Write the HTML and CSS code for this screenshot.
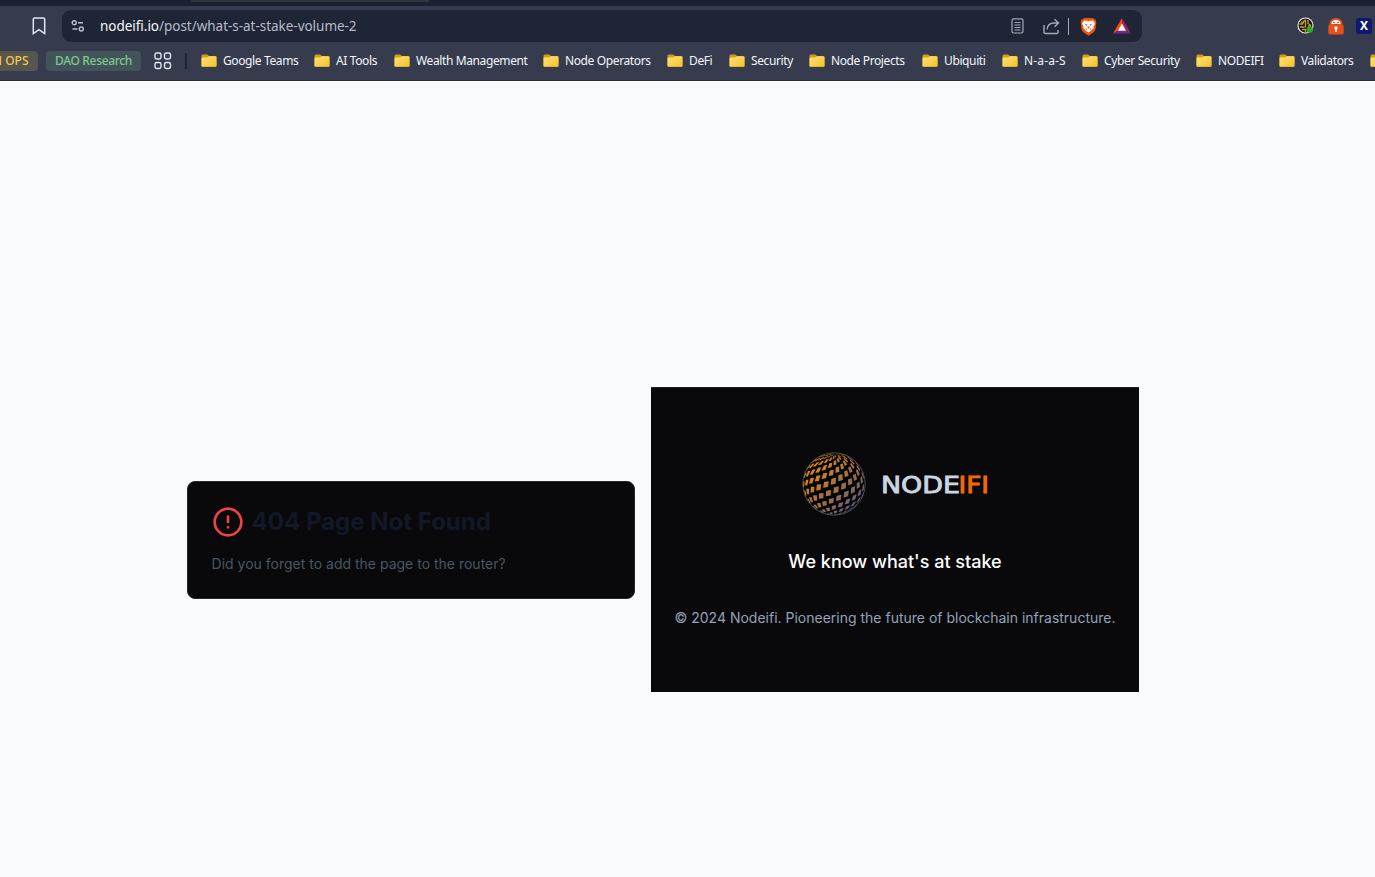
FILE: index.html
```html
<!DOCTYPE html>
<html lang="en">
<head>
<meta charset="utf-8">
<title>404 Page Not Found</title>
<link rel="stylesheet" href="styles.css">
</head>
<body>
<svg class="defs" width="0" height="0">
  <defs>
    <linearGradient id="gold" x1="0" y1="0" x2="1" y2="1"><stop offset="0" stop-color="#ffe47c"/><stop offset="1" stop-color="#f5c22c"/></linearGradient>
    <symbol id="folder" viewBox="0 0 16 14"><path d="M.5 2Q.5.5 2 .5h4L8 2h6q1.500 0 1.500 1.500V12q0 1-1 1h-13q-1 0-1-1z" fill="#d99b13"/><path d="M.5 4.500Q.5 3.500 1.500 3.500H6L8 2.300h6.500q1 0 1 1V11.500q0 1-1 1h-13q-1 0-1-1z" fill="url(#gold)"/></symbol>
  </defs>
</svg>
<div class="tabstrip"><div class="tab"></div></div>
<header class="chrome">
  <div class="toolbar">
    <svg class="bookmark" width="14" height="18" viewBox="0 0 14 18"><path d="M1.300 2.200Q1.300 1 2.500 1h9q1.200 0 1.200 1.200v14.300L7 12.700 1.300 16.500z"/></svg>
    <div class="address">
      <svg class="tune" width="14" height="14" viewBox="0 0 14 14"><circle cx="3.200" cy="3.700" r="2"/><path d="M7 3.700h5M1.500 10h5"/><circle cx="10.300" cy="10" r="2"/></svg>
      <div class="url"><b>nodeifi.io</b>/post/what-s-at-stake-volume-2</div>
      <div class="actions">
        <svg width="14" height="16" viewBox="0 0 14 16"><rect x="1" y=".8" width="11" height="14.200" rx="1.700"/><path d="M3.500 4.500h6M3.500 7h6M3.500 9.500h6M3.500 12h6"/></svg>
        <svg class="share" width="17" height="17" viewBox="0 0 17 17"><path d="M1 7v7.200q0 1.300 1.300 1.300h11.400q1.300 0 1.300-1.300V12M4 11.500C4.500 7.500 7 5 11 5h4.500M11.500 1.300 15.500 5l-4 3.800"/></svg>
        <i class="bar"></i>
        <svg class="lion" width="17" height="19" viewBox="0 0 17 19"><path d="M4 1h9l1.500 1.500h1.200l.6 3-.8 6.500q-.5 2.200-2.500 3.700L8.500 18.700 4 15.700Q2 14.200 1.500 12L.7 5.500l.6-3h1.200z" fill="#f4500b"/><path d="M4 3.500l4.500.6 4.500-.6 2 3-1.500 3 .3 1.500-2.800 2.700-2.500 1.800L6 13.700 3.200 11l.3-1.500L2 6.500z" fill="#fff"/><path d="M4.500 6.500l2.800 1-.5 1.500zM12.500 6.500l-2.800 1 .5 1.500zM7.300 9.500h2.400l-.5 2H7.800zM5.500 11.300l2 1-1.200.7zM11.500 11.300l-2 1 1.200.7z" fill="#f4500b"/></svg>
        <svg class="bat" width="18" height="16" viewBox="0 0 18 16"><path d="M9 0 0 15.500l5.800-3.300L9 6.500z" fill="#ff4713"/><path d="M9 0v6.500l3.200 5.700 5.800 3.300z" fill="#9e1f63"/><path d="M0 15.500h18l-5.800-3.300H5.800z" fill="#662d91"/><path d="m9 5.500 4 7.200H5z" fill="#fff"/></svg>
      </div>
    </div>
    <div class="extensions">
      <svg width="18" height="18" viewBox="0 0 18 18"><circle cx="8.500" cy="8.500" r="7.500" fill="#15130d" stroke="#ece9dd" stroke-width="1.200"/><path d="M2.500 7h3l2-4M3 10h4.500M5 12.500h3.500v3M8.500 2.500v8M11 3v3.500l3 2M11 9h3M4.500 4.500l1.500 2" stroke="#c9a223" stroke-width="1.300" fill="none"/><circle cx="12.700" cy="12.600" r="3.300" fill="#35a52b"/></svg>
      <svg width="16" height="17" viewBox="0 0 16 17"><path d="M2.500 7V5.500a5.500 4.500 0 0 1 11 0V7z" fill="#fff" stroke="#e84e1b" stroke-width="2"/><path d="M5 4.300h1.800M9.200 4.300H11M6 6q2 1 4 0" stroke="#c23a10" stroke-width="1" fill="none"/><rect x=".3" y="6.800" width="15.400" height="9.700" rx="1.500" fill="#e84e1b"/><circle cx="8" cy="10" r="1.700" fill="#fff"/><path d="M7.300 10h1.400v4H7.300z" fill="#fff"/></svg>
      <div class="xbadge">X</div>
    </div>
  </div>
  <nav class="bookmarks">
    <span class="chip amber">N OPS</span>
    <span class="chip green">DAO Research</span>
    <svg class="apps" width="18" height="18" viewBox="0 0 18 18"><rect x="1" y="1" width="6" height="6" rx="1.700"/><rect x="10.500" y="1" width="6" height="6" rx="1.700"/><rect x="1" y="10.500" width="6" height="6" rx="1.700"/><rect x="10.500" y="10.500" width="6" height="6" rx="1.700"/></svg>
    <i class="divider"></i>
    <div class="folders">
      <span><svg><use href="#folder"/></svg>Google Teams</span>
      <span><svg><use href="#folder"/></svg>AI Tools</span>
      <span><svg><use href="#folder"/></svg>Wealth Management</span>
      <span><svg><use href="#folder"/></svg>Node Operators</span>
      <span><svg><use href="#folder"/></svg>DeFi</span>
      <span><svg><use href="#folder"/></svg>Security</span>
      <span><svg><use href="#folder"/></svg>Node Projects</span>
      <span><svg><use href="#folder"/></svg>Ubiquiti</span>
      <span class="wide"><svg><use href="#folder"/></svg>N-a-a-S</span>
      <span><svg><use href="#folder"/></svg>Cyber Security</span>
      <span><svg><use href="#folder"/></svg>NODEIFI</span>
      <span><svg><use href="#folder"/></svg>Validators</span>
      <span><svg><use href="#folder"/></svg></span>
    </div>
  </nav>
</header>
<main class="page">
  <section class="card">
    <div class="heading">
      <svg width="32" height="32" viewBox="0 0 24 24"><circle cx="12" cy="12" r="10"/><path d="M12 8v4M12 16h.01"/></svg>
      <h1>404 Page Not Found</h1>
    </div>
    <p>Did you forget to add the page to the router?</p>
  </section>
  <footer class="footer">
    <div class="brand">
      <svg class="globe" width="64" height="64" viewBox="-32 -32 64 64">
        <defs><linearGradient id="shade" gradientUnits="userSpaceOnUse" x1="-24" y1="-18" x2="20" y2="24"><stop offset="0" stop-color="#e78b0b"/><stop offset=".5" stop-color="#a97340"/><stop offset="1" stop-color="#5d5d85"/></linearGradient></defs>
        <circle r="31.200" fill="#050505" stroke="#4a4b4d" stroke-width="1"/>
        <path id="tiles" fill="url(#shade)"/>
      </svg>
      <svg class="wordmark" width="106" height="32" viewBox="0 0 106 32"><text class="node" x="-1" y="24.500" textLength="79" lengthAdjust="spacingAndGlyphs">NODE</text><text class="ifi" x="76.500" y="24.500" textLength="30.500" lengthAdjust="spacingAndGlyphs">IFI</text></svg>
    </div>
    <p class="tagline">We know what's at stake</p>
    <p class="copyright">© 2024 Nodeifi. Pioneering the future of blockchain infrastructure.</p>
  </footer>
</main>
<script src="globe.js"></script>
</body>
</html>
```
FILE: styles.css
```css
* { box-sizing: border-box; }
body { margin: 0; height: 877px; overflow: hidden; background: #f9fafc; font-family: Inter, sans-serif; }
p, h1 { margin: 0; }
.defs { display: block; }
.tabstrip { height: 6px; background: #1b2032; padding-left: 191px; }
.tab { width: 238px; height: 2px; background: #33373d; border-radius: 0 0 5px 5px; }
.chrome { height: 75px; background: #363c4d; border-bottom: 1px solid #2b2c36; font-family: "Noto Sans", sans-serif; overflow: hidden; }
.toolbar { display: flex; height: 40px; align-items: center; padding-left: 32px; }
.toolbar svg { display: block; flex: none; }
.bookmark { fill: none; stroke: #e2e5ed; stroke-width: 1.5; }
.address { margin-left: 16px; width: 1080px; height: 32px; border-radius: 9px; background: #202536; display: flex; align-items: center; padding: 0 11px 0 9px; flex: none; }
.tune { fill: none; stroke: #bdc1cc; stroke-width: 1.4; }
.url { margin-left: 15px; flex: 1; font-size: 13.5px; color: #b7bbc7; letter-spacing: -.03px; }
.url b { font-weight: 400; color: #f6f7fb; }
.actions { display: flex; align-items: center; fill: none; stroke: #a5a9b5; stroke-width: 1.2; }
.actions > :first-child { margin-right: -1px; }
.share { margin-left: 19px; stroke-width: 1.4; }
.bar { width: 1px; height: 17px; margin-left: 8px; background: #a5a9b5; }
.lion { margin-left: 11px; stroke: none; }
.bat { margin-left: 16px; stroke: none; }
.extensions { margin-left: 155px; display: flex; align-items: center; gap: 12.5px; flex: none; }
.xbadge { width: 16px; height: 16px; border-radius: 3px; background: #101a6c; color: #fff; font: bold 12px/16px "Noto Sans", sans-serif; text-align: center; flex: none; }
.bookmarks { display: flex; align-items: center; height: 30px; font-size: 12px; color: #f4f5f9; white-space: nowrap; }
.chip { height: 20px; line-height: 19px; border-radius: 4px; text-align: center; flex: none; font-weight: 500; letter-spacing: -.35px; }
.amber { width: 48px; margin-left: -10px; padding-right: 9.5px; text-align: right; letter-spacing: 0; background: #56564f; color: #f7c64e; }
.green { width: 95px; margin-left: 8px; background: #42545a; color: #7bc98a; }
.apps { margin-left: 13px; fill: none; stroke: #e4e6ee; stroke-width: 1.4; flex: none; }
.divider { width: 2px; height: 16px; margin-left: 13px; background: #202536; flex: none; }
.folders { margin-left: 14px; padding-bottom: 1px; display: grid; grid-template-columns: 113px 80px 149px 124px 62px 80px 113px 80px 80px 114px 83px 91px 20px; flex: none; }
.folders span { display: flex; align-items: center; gap: 6px; letter-spacing: -.38px; }
.folders .wide { letter-spacing: .15px; }
.folders svg { width: 16px; height: 14px; flex: none; }
.page { height: 796px; padding: 122px 0 0 187px; display: flex; align-items: center; gap: 16px; }
.card { width: 448px; height: 118px; border: 1px solid #27272a; border-radius: 8px; background: #09090b; padding: 24px 23px 22px 23.6px; }
.heading { display: flex; align-items: center; gap: 8px; }
.heading svg { fill: none; stroke: #ef4444; stroke-width: 2; stroke-linecap: round; }
.heading h1 { font-size: 24px; line-height: 32px; font-weight: 700; color: #111827; }
.card p { margin-top: 16px; font-size: 14px; line-height: 20px; color: #4b5563; }
.footer { width: 488px; height: 305px; margin-bottom: 1px; background: #09090b; border-top: 1px solid #1e1e21; padding: 64px 0 0; text-align: center; }
.brand { display: flex; align-items: center; justify-content: center; gap: 16px; height: 64px; }
.wordmark { font-family: "DejaVu Sans", sans-serif; font-size: 23.5px; overflow: visible; }
.node { fill: #cbd5e1; stroke: #cbd5e1; stroke-width: .9; }
.ifi { fill: #f56b00; stroke: #f56b00; stroke-width: .9; }
.tagline { margin-top: 32px; font-size: 18px; line-height: 28px; font-weight: 500; color: #fff; }
.copyright { margin-top: 32px; font-size: 14px; line-height: 20px; color: #94a3b8; }
```
FILE: globe.js
```js
// Builds the globe's tiles: a diagonal lattice of squares wrapped on a slightly tilted sphere.
const R = 31, rad = Math.PI / 180, tilt = 14 * rad;
function project(lat, lon) {
  const a = lat * rad, b = lon * rad;
  const x = Math.cos(a) * Math.sin(b), y = Math.sin(a), z = Math.cos(a) * Math.cos(b);
  return [x * R, (z * Math.sin(tilt) - y * Math.cos(tilt)) * R, z * Math.cos(tilt) + y * Math.sin(tilt)];
}
let d = "";
for (let i = -16; i <= 16; i++) for (let j = -16; j <= 16; j++) {
  const lon = i * 14.5 + j * 5 + 4, lat = i * 6.5 - j * 16 + 3;
  if (Math.abs(lat) > 84 || Math.abs(lon) > 120) continue;
  const p = [[-6.5, -5.2], [-4.5, 4.2], [6.5, 5.2], [4.5, -4.2]].map(([v, u]) => project(lat + v, lon + u));
  if (p.some(q => q[2] < 0)) continue;
  d += "M" + p.map(q => q[0].toFixed(2) + " " + q[1].toFixed(2)).join("L") + "Z";
}
document.getElementById("tiles").setAttribute("d", d);
```
